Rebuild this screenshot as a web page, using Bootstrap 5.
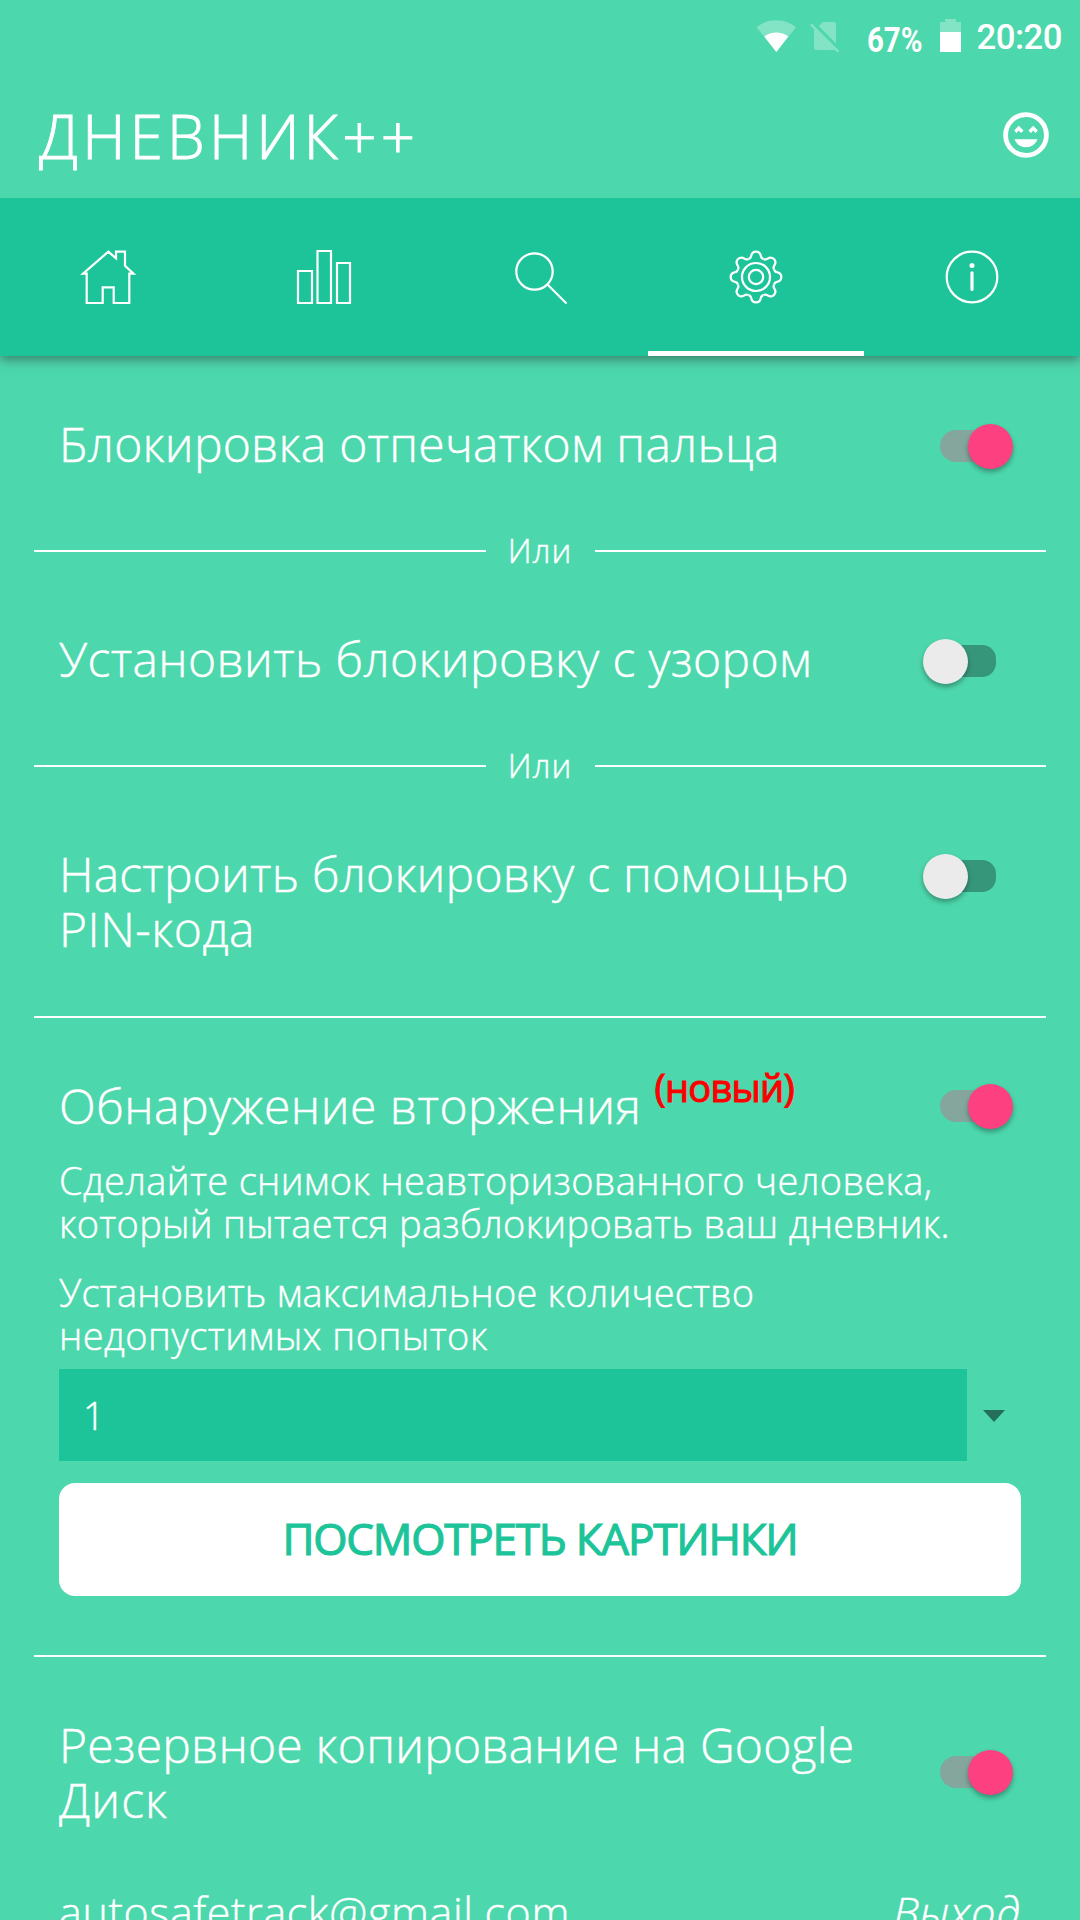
<!DOCTYPE html>
<html lang="ru">
<head>
<meta charset="utf-8">
<meta name="viewport" content="width=device-width, initial-scale=1">
<title>Дневник++</title>
<link href="https://cdn.jsdelivr.net/npm/bootstrap@5.3.0/dist/css/bootstrap.min.css" rel="stylesheet">
<style>
body{background:#4dd7ac;color:#fff;font-family:"Open Sans","Noto Sans",sans-serif;font-weight:300}
.screen{width:1080px;height:1920px}
.statusbar{height:72px;font-family:Roboto,sans-serif;padding-right:18px}
.statusbar svg,.tabs svg,.smile{display:block;flex:none}
.st-wifi{margin:20px 13px 0 0}
.st-sim{margin:22px 27px 0 0}
.st-pct{width:56px;margin:26px 17px 0 0;font-size:35px;line-height:30px;font-weight:700}
.st-pct span{display:inline-block;transform:scaleX(.84);transform-origin:0 50%}
.st-bat{margin:19px 15.5px 0 0}
.st-time{margin-top:21px;font-size:34.7px;line-height:32px;font-weight:500;letter-spacing:-.5px}
.appbar{height:126px;padding:0 31px 0 39px}
.app-title{font-size:60px;line-height:80px;letter-spacing:4.2px;font-weight:300;margin:1px 0 0;-webkit-text-stroke:.9px #fff}
.tabs{height:158px;background:#1ec499;box-shadow:0 4px 10px rgba(40,50,45,.5);clip-path:inset(0 0 -20px 0)}
.tabs a{border-bottom:5px solid transparent;padding-top:5px}
.tabs a.current{border-color:#fff}
.settings{padding:60px 34px 0;-webkit-text-stroke:.45px}
.opt{padding:0 33px 0 25px}
.opt-t{font-size:48px;line-height:55px;font-weight:300;margin:0}
.opt-one{height:55px}
.inset{padding:0 25px}
.txt{font-size:38px;line-height:43px;margin:0}
.gap-top{margin-top:26px}
.orsep{height:46px;margin:57px 0;font-size:33px;line-height:48px;letter-spacing:1px}
.orsep i{height:2px;background:#fff;flex:1}
.orsep span{width:109px;text-align:center}
.rule{height:2px;background:#fff;margin:60px 0}
.rule-b{margin-top:59px}
.newtag{font-size:38px;font-weight:500;color:#f00;line-height:40px;margin:9px 0 6px 13px;transform:translateY(-20px);letter-spacing:-.7px;-webkit-text-stroke:1.1px}
.sw{position:relative;width:92px;height:60px;flex:none}
.sw-low{height:56px}
.sw::before{content:"";position:absolute;left:19px;top:calc(50% - 16px);width:56px;height:32px;border-radius:16px 14px 14px 16px;background:#85a69d}
.sw::after{content:"";position:absolute;left:46.5px;top:calc(50% - 22.5px);width:45px;height:45px;border-radius:50%;background:#fc4080;box-shadow:0 3px 5px rgba(0,0,0,.32)}
.sw.off::before{background:#36967a;left:18px;width:57px}
.sw.off::after{background:#ebebeb;left:1.5px}
.pick{height:92px;line-height:92px;font-size:38px;background:#1ec499;padding-left:24px;width:908px}
.pick-row{margin-top:12px}
.caret{width:54px;padding:2px 0 0 16px}
.btn-pics{height:113px;border-radius:16px;border:0;background:#fff;color:#1ec499;font-size:44px;font-weight:500;padding:0 0 3px;margin-top:22px;letter-spacing:-1.2px;-webkit-text-stroke:1.2px}
.btn-pics:hover{background:#fff;color:#1ec499}
.acct{font-size:43px;line-height:50px;margin-top:60px}
.k1{letter-spacing:.24px}.k2{letter-spacing:.36px}.k3{letter-spacing:.2px}.k4{letter-spacing:.5px}.k5{letter-spacing:.5px}
.k6{letter-spacing:.35px}.k6b{letter-spacing:.3px}.k7{letter-spacing:.18px}.k8{letter-spacing:.48px}.k9{letter-spacing:1px}.k10{letter-spacing:.62px}
</style>
</head>
<body>
<div class="screen overflow-hidden">
  <div class="statusbar d-flex justify-content-end align-items-start">
    <svg class="st-wifi" width="41" height="33" viewBox="0 0 41 33" fill="#fff"><path opacity=".3" d="M20.3 32 .5 7.2a32 32 0 0 1 39.6 0z"/><path d="M20.3 32 8.3 16.5a20 20 0 0 1 24 0z"/></svg>
    <svg class="st-sim" width="30" height="31" viewBox="0 0 30 31" fill="#fff" opacity=".3"><path d="M8.600 4 12.300.8Q13 0 14 0H23.500Q26 0 26 2.500V21.500z"/><path d="M4 6.500 26 28H6.500Q4 28 4 25.500z"/><path d="M0 3.200 1.800 1.500 29.300 29 27.500 30.800z"/></svg>
    <div class="st-pct"><span>67%</span></div>
    <svg class="st-bat" width="21" height="33" viewBox="0 0 21 33" fill="#fff"><path opacity=".3" d="M0 3H5V0H16V3H21V13H0z"/><path d="M0 13H21V33H0z"/></svg>
    <div class="st-time">20:20</div>
  </div>
  <header class="appbar d-flex justify-content-between align-items-center">
    <h1 class="app-title">ДНЕВНИК++</h1>
    <svg class="smile" width="46" height="46" viewBox="-23 -23 46 46"><g fill="none" stroke="#fff"><circle r="20.400" stroke-width="4.800"/><path d="M-10.700-3.300-7.200-6.900-3.700-3.300M3.700-3.300 7.200-6.900 10.700-3.300" stroke-width="3.400"/></g><path fill="#fff" d="M-11.500 4.300H11.500C9.500 9.500 5.200 12.200 0 12.200S-9.500 9.500-11.500 4.300z"/></svg>
  </header>
  <nav class="tabs nav nav-fill flex-nowrap position-relative">
    <a class="nav-item col d-flex align-items-center justify-content-center"><svg width="60" height="60" fill="none" stroke="#fff" stroke-width="2.200"><path d="M30.300 4.700 38 11.300V4.700H47V18.700L55.500 26.700H51.300V56H35.700V40.300H24.700V56H8.700V26.700H5z"/></svg></a>
    <a class="nav-item col d-flex align-items-center justify-content-center"><svg width="60" height="60" fill="none" stroke="#fff" stroke-width="2.200"><path d="M4 24H18V56H4zM23.500 4H37V56H23.500zM43 16H56V56H43z"/></svg></a>
    <a class="nav-item col d-flex align-items-center justify-content-center"><svg width="60" height="60" fill="none" stroke="#fff" stroke-width="2.200"><circle cx="24.500" cy="24.500" r="18.200"/><path d="M37.500 37.500 56.500 56.500"/></svg></a>
    <a class="nav-item col d-flex align-items-center justify-content-center current"><svg width="60" height="60" viewBox="-30 -30 60 60" fill="none" stroke="#fff" stroke-width="2.200"><defs><path id="tooth" d="M-7.500-18.200C-5.200-18.500-5-20-4.700-21.500A4.800 4.800 0 0 1 4.700-21.500C5-20 5.200-18.500 7.500-18.200"/></defs><use href="#tooth"/><use href="#tooth" transform="rotate(45)"/><use href="#tooth" transform="rotate(90)"/><use href="#tooth" transform="rotate(135)"/><use href="#tooth" transform="rotate(180)"/><use href="#tooth" transform="rotate(225)"/><use href="#tooth" transform="rotate(270)"/><use href="#tooth" transform="rotate(315)"/><circle r="14"/><circle r="7.200"/></svg></a>
    <a class="nav-item col d-flex align-items-center justify-content-center"><svg width="60" height="60" viewBox="-30 -30 60 60" fill="none" stroke="#fff" stroke-width="2.200"><circle r="25.300"/><path d="M0-4.200V12.500" stroke-width="3.200" stroke-linecap="round"/><circle cy="-11.500" r="2.500" fill="#fff" stroke="none"/></svg></a>
  </nav>
  <main class="settings">
    <div class="opt opt-one d-flex justify-content-between"><h2 class="opt-t k1">Блокировка отпечатком пальца</h2><span class="sw"></span></div>
    <div class="orsep d-flex align-items-center"><i></i><span>Или</span><i></i></div>
    <div class="opt opt-one d-flex justify-content-between"><h2 class="opt-t k2">Установить блокировку с узором</h2><span class="sw off"></span></div>
    <div class="orsep d-flex align-items-center"><i></i><span>Или</span><i></i></div>
    <div class="opt d-flex justify-content-between"><h2 class="opt-t"><span class="k3">Настроить блокировку с помощью</span><br><span class="k4">PIN-кода</span></h2><span class="sw off"></span></div>
    <div class="rule"></div>
    <div class="opt opt-one d-flex justify-content-between"><div class="d-flex"><h2 class="opt-t k5">Обнаружение вторжения</h2><strong class="newtag">(новый)</strong></div><span class="sw sw-low"></span></div>
    <div class="inset gap-top">
      <p class="txt"><span class="k6">Сделайте снимок неавторизованного человека,</span><br><span class="k6b">который пытается разблокировать ваш дневник.</span></p>
      <p class="txt gap-top"><span class="k7">Установить максимальное количество</span><br><span class="k8">недопустимых попыток</span></p>
      <div class="pick-row d-flex align-items-center"><div class="pick">1</div><div class="caret"><svg class="d-block" width="22" height="12"><path d="M0 0H22L11 12z" fill="#256e57"/></svg></div></div>
      <button class="btn btn-pics w-100 d-block">ПОСМОТРЕТЬ КАРТИНКИ</button>
    </div>
    <div class="rule rule-b"></div>
    <div class="opt d-flex justify-content-between align-items-center"><h2 class="opt-t"><span class="k3">Резервное копирование на Google</span><br><span class="k9">Диск</span></h2><span class="sw"></span></div>
    <div class="inset acct d-flex justify-content-between"><span class="k10">autosafetrack@gmail.com</span><em class="k9">Выход</em></div>
  </main>
</div>
<script src="https://cdn.jsdelivr.net/npm/bootstrap@5.3.0/dist/js/bootstrap.bundle.min.js"></script>
</body>
</html>
